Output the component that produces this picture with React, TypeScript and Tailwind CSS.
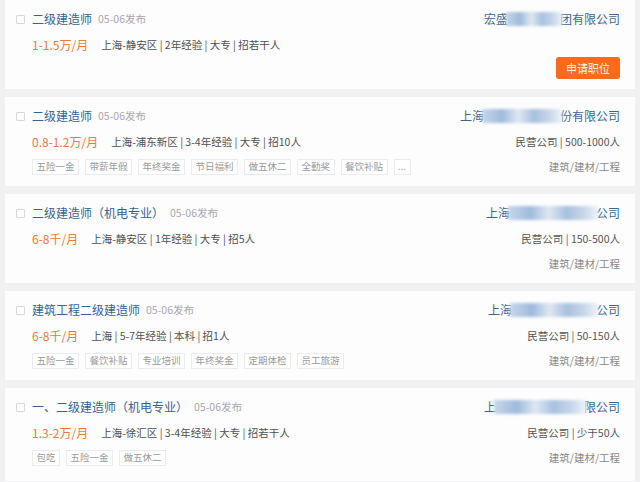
import React from "react";

interface Job {
  title: string;
  salary: string;
  details: string;
  tags?: string[];
  company: { head: string; blur: number; tail: string };
  info?: string;
  industry?: string;
  apply?: boolean;
}

const jobs: Job[] = [
  {
    title: "二级建造师",
    salary: "1-1.5万/月",
    details: "上海-静安区 | 2年经验 | 大专 | 招若干人",
    company: { head: "宏盛", blur: 56, tail: "团有限公司" },
    apply: true,
  },
  {
    title: "二级建造师",
    salary: "0.8-1.2万/月",
    details: "上海-浦东新区 | 3-4年经验 | 大专 | 招10人",
    tags: ["五险一金", "带薪年假", "年终奖金", "节日福利", "做五休二", "全勤奖", "餐饮补贴", "..."],
    company: { head: "上海", blur: 80, tail: "份有限公司" },
    info: "民营公司 | 500-1000人",
    industry: "建筑/建材/工程",
  },
  {
    title: "二级建造师（机电专业）",
    salary: "6-8千/月",
    details: "上海-静安区 | 1年经验 | 大专 | 招5人",
    company: { head: "上海", blur: 90, tail: "公司" },
    info: "民营公司 | 150-500人",
    industry: "建筑/建材/工程",
  },
  {
    title: "建筑工程二级建造师",
    salary: "6-8千/月",
    details: "上海 | 5-7年经验 | 本科 | 招1人",
    tags: ["五险一金", "餐饮补贴", "专业培训", "年终奖金", "定期体检", "员工旅游"],
    company: { head: "上海", blur: 88, tail: "公司" },
    info: "民营公司 | 50-150人",
    industry: "建筑/建材/工程",
  },
  {
    title: "一、二级建造师（机电专业）",
    salary: "1.3-2万/月",
    details: "上海-徐汇区 | 3-4年经验 | 大专 | 招若干人",
    tags: ["包吃", "五险一金", "做五休二"],
    company: { head: "上", blur: 92, tail: "限公司" },
    info: "民营公司 | 少于50人",
    industry: "建筑/建材/工程",
  },
];

function JobCard({ job, last }: { job: Job; last?: boolean }) {
  return (
    <div className={`${last ? "h-[93px]" : "h-[89px]"} shrink-0 bg-[#fdfdfe] flex justify-between`}>
      {/* left: title, salary, welfare tags */}
      <div className="flex pl-[11px] pt-[12px]">
        <div className="w-[9px] h-[9px] mt-[3px] mr-[7px] border border-[#d8d8dc] rounded-[1px] bg-white" />
        <div className="flex flex-col">
          <div className="h-[14px] flex items-center">
            <span className="text-[12px] leading-none text-[#33639a] whitespace-nowrap">{job.title}</span>
            <span className="ml-[6px] text-[10.5px] leading-none text-[#a8a8ad] whitespace-nowrap">05-06发布</span>
          </div>
          <div className="mt-[12px] h-[14px] flex items-center">
            <span className="text-[12px] leading-none text-[#ec7a3a] whitespace-nowrap">{job.salary}</span>
            <span className="ml-[13px] text-[10.5px] leading-none text-[#505050] whitespace-nowrap">{job.details}</span>
          </div>
          {job.tags && (
            <div className="mt-[10px] h-[16px] flex gap-[6px]">
              {job.tags.map((t) => (
                <span
                  key={t}
                  className="h-[16px] px-[3.5px] flex items-center border border-[#ececee] bg-white text-[9.5px] leading-none text-[#9a9a9a] whitespace-nowrap"
                >
                  {t}
                </span>
              ))}
            </div>
          )}
        </div>
      </div>

      {/* right: company, size, industry */}
      <div className="flex flex-col items-end pr-[15px] pt-[12px]">
        <div className="h-[14px] flex items-center text-[12px] leading-none text-[#3a6896] whitespace-nowrap">
          <span>{job.company.head}</span>
          <span
            className="inline-block h-[14px] -mx-[2px] blur-[1.5px] bg-[linear-gradient(90deg,#c6d6ea,#9fbadc_25%,#dfe7f2_45%,#a8c0de_65%,#c9d8ea_85%,#eef2f8)]"
            style={{ width: job.company.blur }}
          />
          <span>{job.company.tail}</span>
        </div>
        {job.apply && (
          <button className="mt-[31px] w-[64px] h-[22px] rounded-[3px] bg-[#fa6a1c] text-white text-[11px] leading-none">
            申请职位
          </button>
        )}
        {job.info && (
          <div className="mt-[12px] h-[14px] flex items-center text-[10.5px] leading-none text-[#555] whitespace-nowrap">
            {job.info}
          </div>
        )}
        {job.industry && (
          <div className="mt-[10px] h-[16px] flex items-center text-[10.5px] leading-none text-[#8a8a8a] whitespace-nowrap">
            {job.industry}
          </div>
        )}
      </div>
    </div>
  );
}

export default function App() {
  return (
    <div
      className="w-[640px] h-[482px] overflow-hidden bg-[#f1f1f4] px-[5px] flex flex-col gap-[8px]"
      style={{ fontFamily: '"Noto Sans CJK SC", "Noto Sans", sans-serif' }}
    >
      {jobs.map((job, i) => (
        <JobCard key={i} job={job} last={i === jobs.length - 1} />
      ))}
    </div>
  );
}
